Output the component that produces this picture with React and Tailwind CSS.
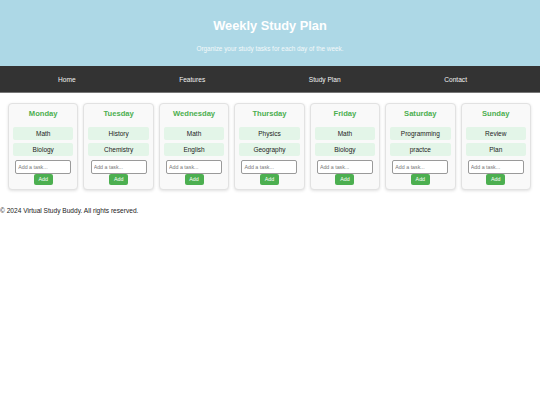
import React from 'react';

const days = [
  { name: 'Monday', tasks: ['Math', 'Biology'] },
  { name: 'Tuesday', tasks: ['History', 'Chemistry'] },
  { name: 'Wednesday', tasks: ['Math', 'English'] },
  { name: 'Thursday', tasks: ['Physics', 'Geography'] },
  { name: 'Friday', tasks: ['Math', 'Biology'] },
  { name: 'Saturday', tasks: ['Programming', 'practce'] },
  { name: 'Sunday', tasks: ['Review', 'Plan'] },
];

function DayCard({ day }) {
  return (
    <div className="flex-1 min-w-0 bg-[#f9f9f9] border border-[#e2e2e2] rounded-[4px] shadow-[0_1px_3px_rgba(0,0,0,0.12)] pt-[5px] px-[4px] pb-[4px] flex flex-col items-center">
      <h3 className="h-[10px] leading-[10px] text-[7.6px] font-bold text-[#4caf50]">{day.name}</h3>
      <div className="mt-[8px] w-full flex flex-col gap-[3px]">
        {day.tasks.map((t, i) => (
          <div key={i} className="h-[13px] leading-[13px] bg-[#e3f5e8] rounded-[2px] text-center text-[6.5px] text-[#222]">
            {t}
          </div>
        ))}
      </div>
      <input
        type="text"
        placeholder="Add a task..."
        className="mt-[4px] w-[56px] h-[14px] border border-[#9a9a9a] rounded-[2px] bg-white px-[2px] text-[5.3px] placeholder:text-[#777] outline-none"
      />
      <button className="w-[19px] h-[11px] bg-[#4caf50] text-white text-[5.3px] rounded-[2px] leading-[11px]">
        Add
      </button>
    </div>
  );
}

export default function App() {
  return (
    <div className="w-[540px] min-h-[405px] bg-white font-['Liberation_Sans',Arial,sans-serif]">
      <header className="h-[66px] bg-[#add8e6] flex flex-col items-center pt-[18px]">
        <h1 className="text-[12.8px] leading-[15px] font-bold text-white">Weekly Study Plan</h1>
        <p className="mt-[12px] text-[6.4px] leading-[8px] text-[#f4f8fa]">Organize your study tasks for each day of the week.</p>
      </header>
      <nav className="h-[27px] bg-[#333] border-b border-[#777] flex items-center justify-between pt-[2px] pl-[58px] pr-[73px] text-[6.6px] text-[#f2f2f2]">
        <a>Home</a>
        <a>Features</a>
        <a>Study Plan</a>
        <a>Contact</a>
      </nav>
      <main className="mt-[10px] pl-[8px] pr-[9px] flex gap-[5px]">
        {days.map(d => (
          <DayCard key={d.name} day={d} />
        ))}
      </main>
      <footer className="mt-[17px] text-[6.6px] leading-[8px] text-[#222]">
        © 2024 Virtual Study Buddy. All rights reserved.
      </footer>
    </div>
  );
}
